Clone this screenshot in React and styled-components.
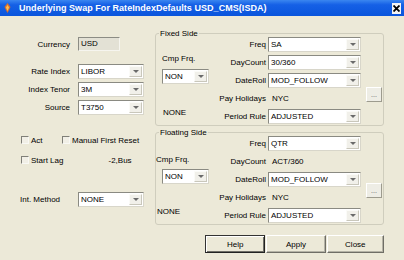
import React from 'react';
import styled, { createGlobalStyle } from 'styled-components';

const Global = createGlobalStyle`
  body { margin: 0; background: #ece9d8; }
`;

const Window = styled.div`
  width: 404px;
  height: 260px;
  background: #ece9d8;
  font-family: Tahoma, "Liberation Sans", Arial, sans-serif;
  font-size: 8px;
  color: #000;
  overflow: hidden;
`;

const TitleBar = styled.div`
  height: 16px;
  display: flex;
  align-items: center;
  padding: 0 3px 0 4px;
  gap: 8px;
  background: linear-gradient(to bottom, #3a86f0 0%, #1560e6 30%, #0a55dc 100%);
  color: #fff;
  font-weight: bold;
  font-size: 9px;
  white-space: nowrap;
`;

const TitleText = styled.span`
  flex: 1;
  letter-spacing: 0.05px;
`;

const CloseBox = styled.div`
  width: 9px;
  height: 11px;
  background: #f4f4f4;
  display: flex;
  align-items: center;
  justify-content: center;
`;

const Body = styled.div`
  display: flex;
`;

const LeftPanel = styled.div`
  width: 155px;
  display: flex;
  flex-direction: column;
`;

const FieldRow = styled.div`
  display: flex;
  align-items: center;
  height: 18px;
  margin-top: ${p => p.$mt || 0}px;
`;

const Label = styled.span`
  width: ${p => p.$w || 70}px;
  text-align: ${p => p.$left ? 'left' : 'right'};
  padding-left: ${p => p.$pl || 0}px;
  box-sizing: border-box;
  flex-shrink: 0;
  white-space: nowrap;
`;

const ReadOnly = styled.div`
  width: 42px;
  height: 14px;
  margin-left: 8px;
  box-sizing: border-box;
  background: #e3e1d5;
  border-top: 1px solid #8c8c84;
  border-left: 1px solid #8c8c84;
  border-right: 1px solid #f6f5ef;
  border-bottom: 1px solid #f6f5ef;
  padding-left: 2px;
  line-height: 12px;
`;

const ComboBox = styled.div`
  width: ${p => p.$w}px;
  height: 15px;
  margin-left: ${p => p.$ml || 0}px;
  box-sizing: border-box;
  background: #fff;
  border-top: 1px solid #8a8a82;
  border-left: 1px solid #8a8a82;
  border-right: 1px solid #d8d6ca;
  border-bottom: 1px solid #d8d6ca;
  display: flex;
  align-items: stretch;
`;

const ComboValue = styled.span`
  flex: 1;
  padding-left: 2px;
  line-height: 13px;
  white-space: nowrap;
  overflow: hidden;
`;

const DropButton = styled.span`
  width: 13px;
  margin: 1px;
  box-sizing: border-box;
  background: #f1f0ea;
  border-left: 1px solid #fbfbf8;
  border-top: 1px solid #fbfbf8;
  border-right: 1px solid #c9c7bb;
  border-bottom: 1px solid #c9c7bb;
  display: flex;
  align-items: center;
  justify-content: center;
`;

const Arrow = styled.span`
  width: 0;
  height: 0;
  border-left: 3px solid transparent;
  border-right: 3px solid transparent;
  border-top: 3px solid #6a6a6a;
`;

const Combo = ({ value, w, ml }) => (
  <ComboBox $w={w} $ml={ml}>
    <ComboValue>{value}</ComboValue>
    <DropButton><Arrow /></DropButton>
  </ComboBox>
);

const CheckRow = styled.div`
  display: flex;
  align-items: center;
  height: 12px;
  margin-top: ${p => p.$mt || 0}px;
  padding-left: 21px;
`;

const Check = styled.label`
  display: flex;
  align-items: center;
  gap: 1px;
  width: ${p => p.$w ? p.$w + 'px' : 'auto'};
  white-space: nowrap;
`;

const CheckBox = styled.span`
  width: 8px;
  height: 8px;
  box-sizing: border-box;
  border-top: 1px solid #7f7f78;
  border-left: 1px solid #7f7f78;
  border-right: 1px solid #f8f8f4;
  border-bottom: 1px solid #f8f8f4;
  background: #f1efe6;
  margin-right: 1px;
`;

const LagText = styled.span`
  margin-left: 45px;
`;

const RightPanel = styled.div`
  width: 229px;
  display: flex;
  flex-direction: column;
`;

const GroupBox = styled.div`
  position: relative;
  margin-top: ${p => p.$mt}px;
  height: 93px;
  box-sizing: border-box;
  border: 1px solid #cfcdbd;
  border-radius: 3px;
  padding-top: 1px;
  display: grid;
  grid-template-columns: 56px 54px 95px 22px;
  grid-template-rows: repeat(5, 18px);
`;

const Legend = styled.span`
  position: absolute;
  top: -6px;
  left: 3px;
  padding: 0 1px;
  line-height: 11px;
  background: #ece9d8;
`;

const CmpColumn = styled.div`
  grid-column: 1;
  grid-row: 1 / -1;
  display: flex;
  flex-direction: column;
  padding-left: ${p => p.$pl}px;
  padding-top: ${p => p.$pt}px;
`;

const CmpLabel = styled.span`
  height: 11px;
  line-height: 11px;
`;

const CmpBox = styled.div`
  margin-top: ${p => p.$gap}px;
  margin-left: ${p => p.$ml}px;
`;

const NoneText = styled.span`
  margin-top: auto;
  margin-bottom: 8px;
  margin-left: ${p => p.$ml}px;
`;

const GLabel = styled.span`
  grid-column: 2;
  grid-row: ${p => p.$row};
  align-self: center;
  text-align: right;
  white-space: nowrap;
`;

const GField = styled.div`
  grid-column: 3;
  grid-row: ${p => p.$row};
  align-self: center;
  padding-left: 2px;
`;

const PlainValue = styled.span`
  padding-left: 4px;
`;

const Ellipsis = styled.div`
  grid-column: 4;
  grid-row: ${p => p.$row};
  align-self: start;
  margin-top: ${p => p.$mt}px;
  margin-left: 5px;
  width: 16px;
  height: 15px;
  box-sizing: border-box;
  background: #eeede5;
  border-top: 1px solid #fff;
  border-left: 1px solid #fff;
  border-right: 1px solid #9d9b8e;
  border-bottom: 1px solid #9d9b8e;
  display: flex;
  justify-content: center;
  align-items: flex-end;
  line-height: 9px;
  padding-bottom: 2px;
  font-size: 7px;
  color: #555;
`;

const ButtonRow = styled.div`
  display: flex;
  gap: 1px;
  margin-top: 10px;
  padding-left: 50px;
`;

const Button = styled.div`
  width: ${p => p.$w}px;
  height: 18px;
  box-sizing: border-box;
  background: #ece9d8;
  border-top: 1px solid ${p => p.$default ? '#333' : '#fff'};
  border-left: 1px solid ${p => p.$default ? '#333' : '#fff'};
  border-right: 1px solid ${p => p.$default ? '#222' : '#6f6e66'};
  border-bottom: 1px solid ${p => p.$default ? '#222' : '#6f6e66'};
  box-shadow: ${p => p.$default
    ? 'inset 1px 1px 0 #fff, inset -1px -1px 0 #6f6e66'
    : 'inset -1px -1px 0 #b5b3a6'};
  display: flex;
  align-items: center;
  justify-content: center;
`;

const SideGroup = ({ title, mt, data, cmp }) => (
  <GroupBox $mt={mt}>
    <Legend>{title}</Legend>
    <CmpColumn $pl={cmp.pl} $pt={cmp.pt}>
      <CmpLabel>Cmp Frq.</CmpLabel>
      <CmpBox $gap={cmp.gap} $ml={cmp.boxMl}>
        <Combo value="NON" w={47} />
      </CmpBox>
      <NoneText $ml={cmp.noneMl}>NONE</NoneText>
    </CmpColumn>
    {data.map((d, i) => (
      <React.Fragment key={d.label}>
        <GLabel $row={i + 1}>{d.label}</GLabel>
        <GField $row={i + 1}>
          {d.combo ? <Combo value={d.value} w={93} /> : <PlainValue>{d.value}</PlainValue>}
        </GField>
      </React.Fragment>
    ))}
    <Ellipsis $row={4} $mt={cmp.dotsMt}>...</Ellipsis>
  </GroupBox>
);

const fixedData = [
  { label: 'Freq', value: 'SA', combo: true },
  { label: 'DayCount', value: '30/360', combo: true },
  { label: 'DateRoll', value: 'MOD_FOLLOW', combo: true },
  { label: 'Pay Holidays', value: 'NYC', combo: false },
  { label: 'Period Rule', value: 'ADJUSTED', combo: true },
];

const floatingData = [
  { label: 'Freq', value: 'QTR', combo: true },
  { label: 'DayCount', value: 'ACT/360', combo: false },
  { label: 'DateRoll', value: 'MOD_FOLLOW', combo: true },
  { label: 'Pay Holidays', value: 'NYC', combo: false },
  { label: 'Period Rule', value: 'ADJUSTED', combo: true },
];

const TitleIcon = () => (
  <svg width="7" height="10" viewBox="0 0 7 10">
    <path d="M3.5 0 L6.5 4 L3.5 10 L0.5 4 Z" fill="#e0702a" />
    <path d="M3.5 2 L5 4.5 L3.5 8 L2 4.5 Z" fill="#f7c05a" />
  </svg>
);

export default function App() {
  return (
    <Window>
      <Global />
      <TitleBar>
        <TitleIcon />
        <TitleText>Underlying Swap For RateIndexDefaults USD_CMS(ISDA)</TitleText>
        <CloseBox>
          <svg width="7" height="7" viewBox="0 0 7 7">
            <path d="M0.5 0.5 L6.5 6.5 M6.5 0.5 L0.5 6.5" stroke="#000" strokeWidth="1.8" />
          </svg>
        </CloseBox>
      </TitleBar>
      <Body>
        <LeftPanel>
          <FieldRow $mt={19}>
            <Label>Currency</Label>
            <ReadOnly>USD</ReadOnly>
          </FieldRow>
          <FieldRow $mt={9}>
            <Label>Rate Index</Label>
            <Combo value="LIBOR" w={66} ml={8} />
          </FieldRow>
          <FieldRow>
            <Label>Index Tenor</Label>
            <Combo value="3M" w={66} ml={8} />
          </FieldRow>
          <FieldRow>
            <Label>Source</Label>
            <Combo value="T3750" w={66} ml={8} />
          </FieldRow>
          <CheckRow $mt={18}>
            <Check $w={41}><CheckBox />Act</Check>
            <Check><CheckBox />Manual First Reset</Check>
          </CheckRow>
          <CheckRow $mt={8}>
            <Check><CheckBox />Start Lag</Check>
            <LagText>-2,Bus</LagText>
          </CheckRow>
          <FieldRow $mt={24}>
            <Label $left $pl={20} $w={78}>Int. Method</Label>
            <Combo value="NONE" w={66} />
          </FieldRow>
        </LeftPanel>
        <RightPanel>
          <SideGroup
            title="Fixed Side"
            mt={17}
            data={fixedData}
            cmp={{ pl: 6, pt: 18, gap: 5, boxMl: 0, noneMl: 1, dotsMt: -2 }}
          />
          <SideGroup
            title="Floating Side"
            mt={6}
            data={floatingData}
            cmp={{ pl: 0, pt: 20, gap: 4, boxMl: 6, noneMl: 1, dotsMt: -5 }}
          />
          <ButtonRow>
            <Button $w={62} $default>Help</Button>
            <Button $w={61}>Apply</Button>
            <Button $w={59}>Close</Button>
          </ButtonRow>
        </RightPanel>
      </Body>
    </Window>
  );
}
